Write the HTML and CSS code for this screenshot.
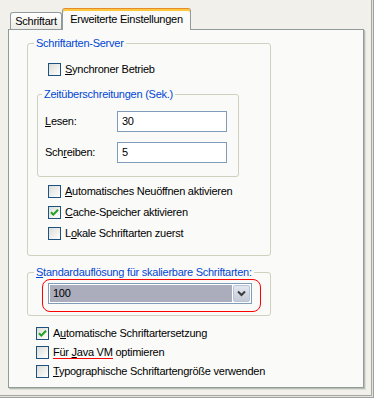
FILE: index.html
```html
<!DOCTYPE html>
<html lang="de">
<head>
<meta charset="utf-8">
<title>Erweiterte Einstellungen</title>
<link rel="stylesheet" href="styles.css">
</head>
<body>
<div class="window">
  <div class="tabs">
    <div class="tab">Schriftart</div>
    <div class="tab active">Erweiterte Einstellungen</div>
  </div>
  <div class="panel">
    <fieldset class="group g-server">
      <legend>Schriftarten-Server</legend>
      <div class="check first"><span class="box"></span><span><u>S</u>ynchroner Betrieb</span></div>
      <fieldset class="group g-timeout">
        <legend>Zeitüberschreitungen (Sek.)</legend>
        <div class="field"><span class="label"><u>L</u>esen:</span><span class="input">30</span></div>
        <div class="field"><span class="label">Sch<u>r</u>eiben:</span><span class="input">5</span></div>
      </fieldset>
      <div class="check"><span class="box"></span><span><u>A</u>utomatisches Neuöffnen aktivieren</span></div>
      <div class="check"><span class="box checked"><svg viewBox="0 0 11 11" width="11" height="11"><path d="M2 5.2 L4.3 7.6 L9 2.8" fill="none" stroke="#21A121" stroke-width="2"/></svg></span><span><u>C</u>ache-Speicher aktivieren</span></div>
      <div class="check"><span class="box"></span><span>L<u>o</u>kale Schriftarten zuerst</span></div>
    </fieldset>
    <fieldset class="group g-res">
      <legend><u>S</u>tandardauflösung für skalierbare Schriftarten:</legend>
      <div class="highlight">
        <div class="combo">
          <span class="value">100</span>
          <span class="drop"><svg viewBox="0 0 17 17" width="17" height="17"><path d="M5 6.5 L8.5 10 L12 6.5" fill="none" stroke="#3C3C3C" stroke-width="2"/></svg></span>
        </div>
      </div>
    </fieldset>
    <div class="bottom-checks">
      <div class="check"><span class="box checked"><svg viewBox="0 0 11 11" width="11" height="11"><path d="M2 5.2 L4.3 7.6 L9 2.8" fill="none" stroke="#21A121" stroke-width="2"/></svg></span><span>A<u>u</u>tomatische Schriftartersetzung</span></div>
      <div class="check"><span class="box"></span><span><span class="spell">Für <u>J</u>ava VM</span> optimieren</span></div>
      <div class="check"><span class="box"></span><span><u>T</u>ypographische Schriftartengröße verwenden</span></div>
    </div>
  </div>
</div>
</body>
</html>
```
FILE: styles.css
```css
* { box-sizing: border-box; }

body {
  margin: 0;
  font: 11px/13px "Liberation Sans", Arial, sans-serif;
  letter-spacing: -0.25px;
  color: #000;
  background: #F1F0EA;
}

.window {
  width: 374px;
  height: 398px;
  padding: 8px 0 0 8px;
  background: #F1F0EA;
  box-shadow: inset -1px -1px 0 #A0A0A0, inset -2px -2px 0 #E4E3DC, inset -3px -3px 0 #A7A7A2;
}

.tabs {
  display: flex;
  align-items: flex-start;
  height: 22px;
  padding-left: 2px;
}

.tab {
  width: 52px;
  height: 17px;
  margin-top: 4px;
  border: 1px solid #919B9C;
  border-bottom: none;
  border-radius: 3px 3px 0 0;
  background: linear-gradient(#FFFFFF, #ECEBE6);
  text-align: center;
  padding-top: 2px;
}

.tab.active {
  position: relative;
  z-index: 1;
  width: 129px;
  height: 22px;
  margin-top: 0;
  border-top: 1px solid #E68B2C;
  box-shadow: inset 0 2px 0 #FFC73C;
  background: #FAFAF8;
  padding-top: 4px;
}

.panel {
  width: 356px;
  height: 359px;
  margin-top: -1px;
  border: 1px solid #919B9C;
  background: #FAFAF8;
  box-shadow: 1px 1px 0 #B9BFB6, 2px 2px 0 #DCDED6;
}

.group {
  margin: 0;
  padding: 0;
  border: 1px solid #D0D0BF;
  border-radius: 3px;
  min-width: 0;
}

.group legend {
  padding: 0 2px;
  margin-left: 6px;
  color: #0046D5;
  line-height: 13px;
  white-space: nowrap;
}

.g-server {
  width: 244px;
  height: 219px;
  margin: 7px 0 0 18px;
}

.g-server > .check {
  margin: 8px 0 0 20px;
}

.g-server > .check.first {
  margin-top: 13px;
}

.g-timeout {
  width: 202px;
  height: 89px;
  margin: 12px 0 0 9px;
}

.g-timeout legend {
  margin-left: 4px;
}

.field {
  display: flex;
  align-items: center;
  height: 21px;
  margin: 10px 0 0 7px;
}

.label {
  width: 72px;
}

.input {
  width: 110px;
  height: 21px;
  border: 1px solid #7F9DB9;
  background: #FFFFFF;
  padding-left: 4px;
  line-height: 19px;
}

.check {
  display: flex;
  align-items: center;
  gap: 4px;
  height: 13px;
  white-space: nowrap;
}

.box {
  flex: none;
  width: 13px;
  height: 13px;
  border: 1px solid #1C5180;
  background: linear-gradient(135deg, #DCDCD7, #FFFFFF);
  display: flex;
}

.g-res {
  width: 244px;
  height: 50px;
  margin: 10px 0 0 18px;
}

.highlight {
  width: 219px;
  height: 33px;
  margin-left: 14px;
  border: 1px solid #FF0000;
  border-radius: 8px;
  padding: 3px 0 0 5px;
}

.combo {
  display: flex;
  width: 204px;
  height: 21px;
  border: 1px solid #7F9DB9;
  background: #FFFFFF;
  padding: 1px;
}

.value {
  flex: 1;
  background: #ABADBC;
  padding-left: 3px;
  line-height: 17px;
}

.drop {
  width: 17px;
  height: 17px;
  margin-left: 1px;
  border: 1px solid #BAC4D8;
  border-radius: 2px;
  background: linear-gradient(#E3E7EF, #C4CAD8);
  display: flex;
}

.drop svg {
  margin: -1px;
}

.bottom-checks {
  margin: 11px 0 0 27px;
  display: flex;
  flex-direction: column;
  gap: 6px;
}

.spell {
  display: inline-block;
  line-height: 11px;
  border-bottom: 1px solid #FF0000;
}
```
